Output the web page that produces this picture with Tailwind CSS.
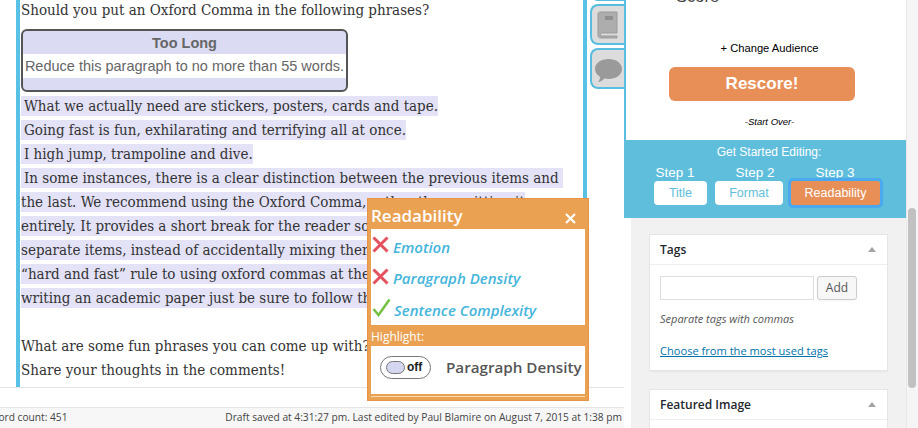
<!DOCTYPE html>
<html lang="en">
<head>
  <meta charset="UTF-8" />
  <title>Edit Post</title>
  <script src="https://cdn.jsdelivr.net/npm/@tailwindcss/browser@4"></script>
</head>
<body class="bg-[#f1f1f1] overflow-hidden">
<div class="relative flex w-[918px] h-[428px] overflow-hidden font-['Open_Sans',sans-serif]">

  <!-- Editor column -->
  <div class="w-[624px] h-full flex flex-col shrink-0 bg-white">
    <div class="h-[388px] flex shrink-0 border-b border-[#e5e5e5]">
      <div class="w-[16px] shrink-0"></div>
      <!-- Post content -->
      <div class="w-[571px] shrink-0 border-x-4 border-[#58c1e6] overflow-hidden font-['DejaVu_Serif_Condensed','DejaVu_Serif',serif] text-[15px] leading-[24px] text-[#333] whitespace-nowrap">
        <div class="-mt-[2px] pl-[1px]">Should you put an Oxford Comma in the following phrases?</div>
        <div class="ml-[1px] mt-[7px] w-[327px] h-[63px] border-2 border-[#555] rounded-md bg-[#dbdbf3] font-['Liberation_Sans',sans-serif] text-[#666]">
          <div class="h-[23px] text-center font-bold text-[14.5px] leading-[25px]">Too Long</div>
          <div class="h-[24px] bg-white text-center text-[14.5px] leading-[24px]">Reduce this paragraph to no more than 55 words.</div>
        </div>
        <div class="mt-[2px] pl-[1px]">
          <div><span class="bg-[#e3e2f7] py-[1px] pl-[3px]">What we actually need are stickers, posters, cards and tape.</span></div>
          <div><span class="bg-[#e3e2f7] py-[1px] pl-[3px]">Going fast is fun, exhilarating and terrifying all at once.</span></div>
          <div><span class="bg-[#e3e2f7] py-[1px] pl-[3px]">I high jump, trampoline and dive.</span></div>
          <div><span class="bg-[#e3e2f7] py-[1px] pl-[3px] pr-[4px]">In some instances, there is a clear distinction between the previous items and</span></div>
          <div><span class="bg-[#e3e2f7] py-[1px]">the last. We recommend using the Oxford Comma, rather than omitting it</span></div>
          <div><span class="bg-[#e3e2f7] py-[1px]">entirely. It provides a short break for the reader so that they can see the</span></div>
          <div><span class="bg-[#e3e2f7] py-[1px]">separate items, instead of accidentally mixing them together in their mind.</span></div>
          <div><span class="bg-[#e3e2f7] py-[1px]">“hard and fast” rule to using oxford commas at the end of the list, so if you</span></div>
          <div><span class="bg-[#e3e2f7] py-[1px]">writing an academic paper just be sure to follow the style guide you were given.</span></div>
        </div>
        <div class="mt-[24px] pl-[1px]">What are some fun phrases you can come up with?</div>
        <div class="pl-[1px]">Share your thoughts in the comments!</div>
      </div>
      <!-- Tool tabs -->
      <div class="flex-1 flex flex-col gap-[3px] pl-[3px] -mt-[40px] overflow-hidden">
        <div class="shrink-0 h-[41px] border-2 border-r-0 border-[#58bde0] rounded-l-lg bg-[#dcdcdc]"></div>
        <div class="shrink-0 h-[41px] border-2 border-r-0 border-[#58bde0] rounded-l-lg bg-[#dcdcdc] flex items-center justify-center">
          <svg width="22" height="28" viewBox="0 0 22 28"><path d="M3 1h17v21H5c-2 0-2 3 0 3h15v2H4c-2 0-3-1-3-3V3c0-1 1-2 2-2z" fill="#adadad" stroke="#9a9a9a"/><rect x="8" y="5" width="8" height="4" fill="#8f8f8f"/></svg>
        </div>
        <div class="shrink-0 h-[41px] border-2 border-r-0 border-[#58bde0] rounded-l-lg bg-[#dcdcdc] flex items-center justify-center">
          <svg width="29" height="25" viewBox="0 0 29 25" class="mt-[3px]"><path d="M14.5 1C22 1 28 5 28 11s-6 10-13.500 10c-1.500 0-3-.2-4.300-.5C8.500 22.500 6.500 24 4 24c1.300-1.300 2-3 2-5C3 17 1 14.200 1 11 1 5 7 1 14.500 1z" fill="#9a9a9a"/></svg>
        </div>
      </div>
    </div>
    <div class="h-[19px] shrink-0"></div>
    <div class="flex-1 flex justify-between items-center border-t border-[#e5e5e5] bg-[#f7f7f7] text-[10.2px] text-[#444] whitespace-nowrap">
      <span class="-ml-[11px]">Word count: 451</span>
      <span class="pr-[2px]">Draft saved at 4:31:27 pm. Last edited by Paul Blamire on August 7, 2015 at 1:38 pm</span>
    </div>
  </div>

  <!-- Sidebar column -->
  <div class="w-[282px] h-full flex flex-col shrink-0">
    <div class="h-[140px] shrink-0 bg-white border-l-2 border-[#58bde0] font-['Liberation_Sans',sans-serif] relative overflow-hidden">
      <div class="-mt-[14px] ml-[50px] text-[16.5px] leading-[20px] text-[#444]">Score</div>
      <div class="mt-[35px] text-center text-[11.2px] leading-[14px] text-black pl-[7px]">+ Change Audience</div>
      <div class="mt-[12px] ml-[43px] w-[186px] h-[34px] rounded-md bg-[#e88f58] text-white font-bold text-[17px] leading-[33px] text-center">Rescore!</div>
      <div class="mt-[15px] text-center italic text-[9.5px] leading-[12px] text-black pl-[7px]">-Start Over-</div>
    </div>
    <div class="h-[78px] shrink-0 bg-[#5fbedc] text-white font-['Liberation_Sans',sans-serif] flex flex-col items-center">
      <div class="mt-[5px] pl-[8px] text-[12px] leading-[15px]">Get Started Editing:</div>
      <div class="mt-[4px] flex pr-[20px] text-[13.5px] leading-[17px] text-center">
        <span class="w-[80px]">Step 1</span>
        <span class="w-[80px]">Step 2</span>
        <span class="w-[80px]">Step 3</span>
      </div>
      <div class="flex gap-[8px] pl-[4px] text-[12.5px] leading-[24px] text-center">
        <span class="w-[53px] h-[24px] rounded-[4px] bg-white text-[#5fbedc]">Title</span>
        <span class="w-[68px] h-[24px] rounded-[4px] bg-white text-[#5fbedc]">Format</span>
        <span class="w-[89px] h-[24px] rounded-[2px] bg-[#e88f58] outline-[3px] outline-[#4aa8ee] text-white">Readability</span>
      </div>
    </div>
    <div class="flex-1 flex min-h-0">
      <div class="w-[7px] shrink-0 bg-white"></div>
      <div class="ml-[18px] w-[239px] pt-[16px] flex flex-col gap-[18px] overflow-hidden">
        <div class="shrink-0 h-[137px] bg-white border border-[#e5e5e5] shadow-xs">
          <div class="h-[30px] pl-[10px] pr-[11px] flex items-center justify-between border-b border-[#eeeeee] text-[12px] font-semibold text-[#23282d]">
            <span>Tags</span>
            <span class="w-0 h-0 border-x-[4px] border-x-transparent border-b-[5px] border-b-[#a0a5aa]"></span>
          </div>
          <div class="px-[10px] pt-[11px]">
            <div class="flex gap-[3px]">
              <div class="w-[154px] h-[24px] border border-[#ddd] bg-white"></div>
              <div class="w-[40px] h-[24px] rounded-[3px] border border-[#ccc] bg-[#f7f7f7] text-[12px] leading-[22px] text-center text-[#555] shadow-xs">Add</div>
            </div>
            <div class="mt-[11px] text-[11px] leading-[16px] italic text-[#555]">Separate tags with commas</div>
            <div class="mt-[16px] text-[11.1px] leading-[16px] underline text-[#0073aa] whitespace-nowrap">Choose from the most used tags</div>
          </div>
        </div>
        <div class="shrink-0 h-[60px] bg-white border border-[#e5e5e5]">
          <div class="h-[30px] pl-[10px] pr-[11px] flex items-center justify-between border-b border-[#eeeeee] text-[12px] font-semibold text-[#23282d]">
            <span>Featured Image</span>
            <span class="w-0 h-0 border-x-[4px] border-x-transparent border-b-[5px] border-b-[#a0a5aa]"></span>
          </div>
        </div>
      </div>
    </div>
  </div>

  <!-- Scrollbar -->
  <div class="flex-1 bg-[#f5f5f5] border-l border-[#e8e8e8] pt-[208px] pl-[1px]">
    <div class="w-[8px] h-[180px] rounded-full bg-[#c1c1c1]"></div>
  </div>

  <!-- Readability popup -->
  <div class="absolute left-[367px] top-[198px] w-[222px] h-[203px] bg-[#eba152] border border-[#e8934a] px-[3px] text-white">
    <div class="h-[30px] flex items-center justify-between pr-[7px]">
      <span class="text-[17px] font-semibold leading-[30px] pt-[4px]">Readability</span>
      <svg width="11" height="11" viewBox="0 0 11 11" class="mt-[8px] mr-[2px]"><path d="M1 1l9 9M10 1l-9 9" stroke="#fff" stroke-width="2.200"/></svg>
    </div>
    <div class="h-[96px] pt-[2px] bg-white text-[#45b5dc] italic font-semibold text-[15px] leading-[20px]">
      <div class="h-[31px] flex items-center">
        <svg width="17" height="17" viewBox="0 0 17 17" class="ml-[1px] -mt-[4px] shrink-0"><path d="M1.500 1.500l14 14M15.500 1.500l-14 14" stroke="#e5525e" stroke-width="3"/></svg>
        <span class="ml-[4px]">Emotion</span>
      </div>
      <div class="h-[31px] flex items-center">
        <svg width="17" height="17" viewBox="0 0 17 17" class="ml-[1px] -mt-[2px] shrink-0"><path d="M1.500 1.500l14 14M15.500 1.500l-14 14" stroke="#e5525e" stroke-width="3"/></svg>
        <span class="ml-[4px]">Paragraph Density</span>
      </div>
      <div class="h-[32px] flex items-center pt-[1px]">
        <svg width="19" height="19" viewBox="0 0 19 19" class="ml-[1px] -mt-[5px] shrink-0"><path d="M1.500 11l5 6L17.500 1.500" fill="none" stroke="#74c043" stroke-width="2.500"/></svg>
        <span class="ml-[3px]">Sentence Complexity</span>
      </div>
    </div>
    <div class="h-[21px] text-[12px] leading-[23px]">Highlight:</div>
    <div class="h-[48px] bg-white flex items-center pl-[9px]">
      <div class="w-[51px] h-[23px] rounded-full border border-[#777] flex items-center pl-[5px] gap-[2px] -mt-[6px]">
        <span class="w-[19px] h-[13px] rounded-full border border-[#777] bg-[#d5d6f0]"></span>
        <span class="font-['Liberation_Sans',sans-serif] font-bold text-[12px] text-[#222]">off</span>
      </div>
      <span class="ml-[15px] -mt-[6px] text-[15.2px] font-semibold text-[#555] whitespace-nowrap">Paragraph Density</span>
    </div>
    <div class="mt-[2px] h-[1px] bg-[#f7d9b5]"></div>
  </div>
</div>
</body>
</html>
